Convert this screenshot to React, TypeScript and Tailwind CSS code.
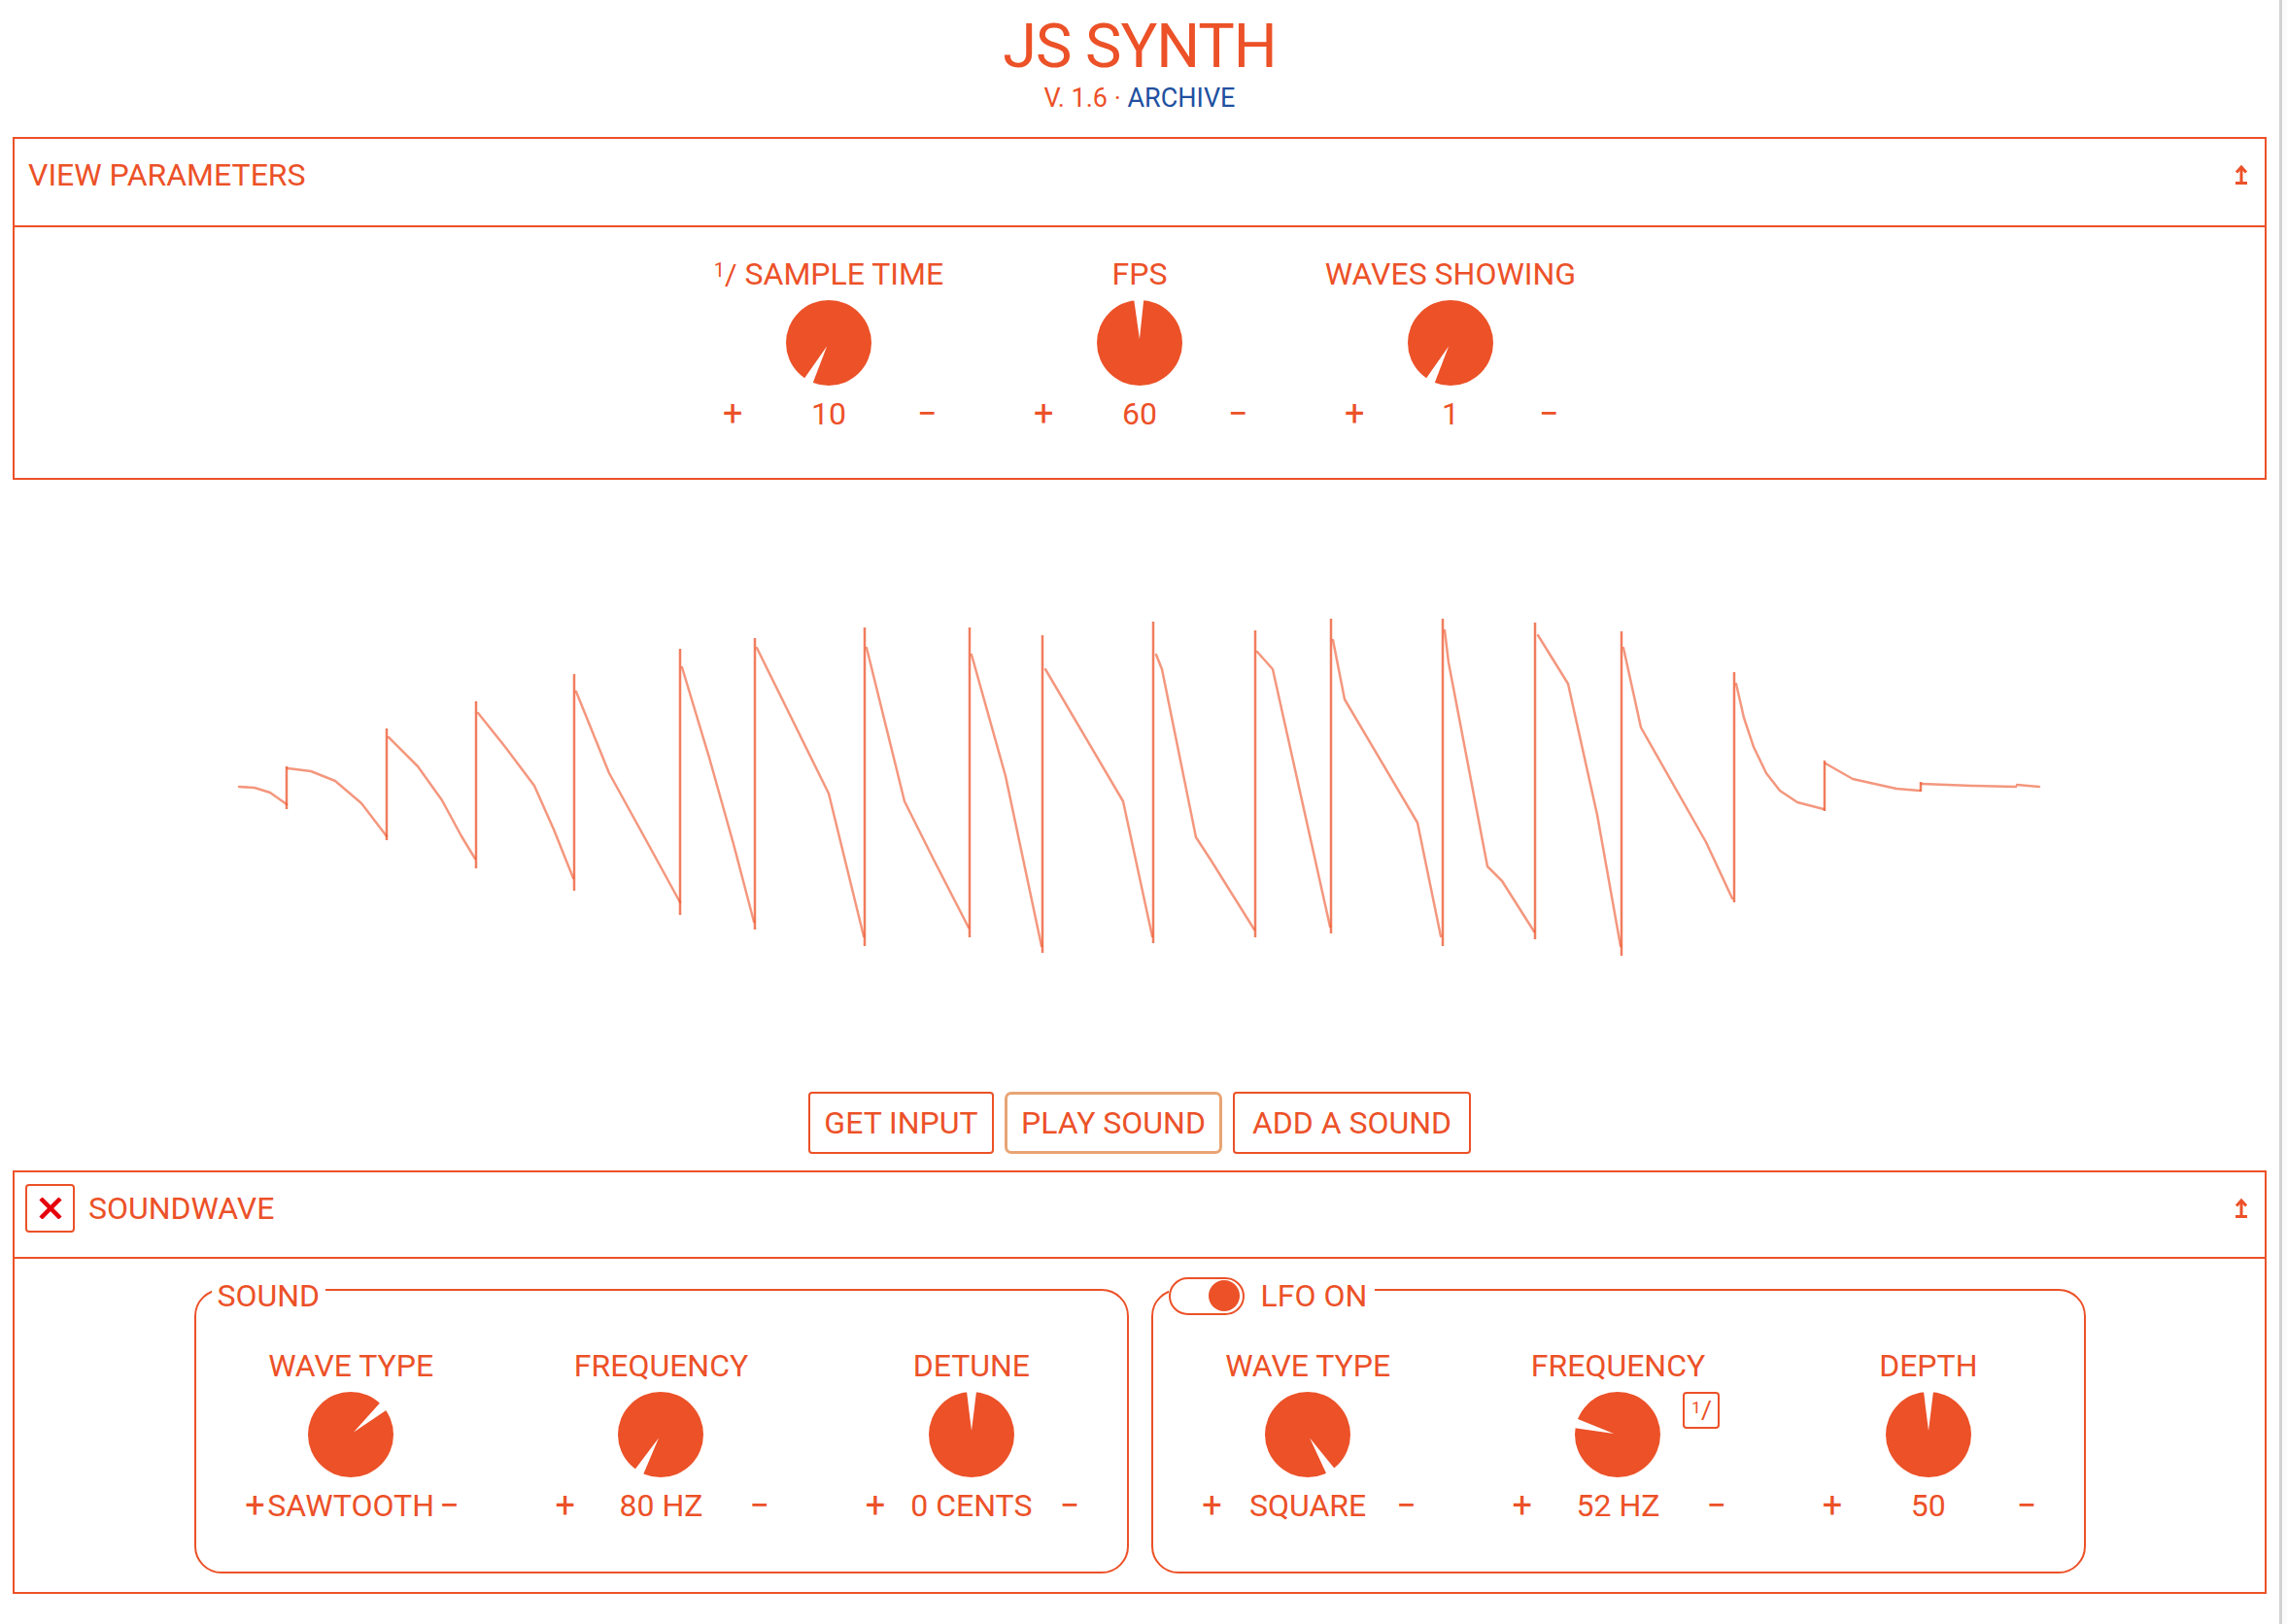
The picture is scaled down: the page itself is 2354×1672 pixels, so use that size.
import React from "react";

const ORANGE = "#EC5128";

type Pt = [number, number];

// waveform trace in page pixels: descending strokes, then the vertical jumps
const SEGMENTS: Pt[][] = [
  [[246, 811], [262, 812], [278, 817], [295, 829]],
  [[296, 792], [320, 795], [345, 805], [372, 828], [398, 862]],
  [[400, 760], [430, 790], [455, 825], [475, 862], [489, 885]],
  [[492, 735], [520, 770], [550, 810], [570, 855], [590, 905]],
  [[593, 713], [627, 797], [665, 866], [700, 930]],
  [[702, 688], [730, 781], [755, 870], [776, 950]],
  [[779, 668], [853, 818], [889, 965]],
  [[892, 668], [931, 826], [961, 886], [997, 956]],
  [[1000, 675], [1035, 800], [1072, 975]],
  [[1076, 690], [1156, 826], [1186, 965]],
  [[1190, 675], [1196, 690], [1231, 863], [1246, 886], [1291, 958]],
  [[1294, 672], [1310, 690], [1369, 955]],
  [[1372, 660], [1384, 721], [1459, 848], [1483, 965]],
  [[1487, 650], [1491, 683], [1531, 893], [1546, 908], [1579, 960]],
  [[1583, 655], [1614, 705], [1644, 840], [1668, 975]],
  [[1671, 668], [1689, 750], [1756, 868], [1783, 926]],
  [[1787, 705], [1795, 740], [1805, 770], [1818, 797], [1832, 815], [1850, 827], [1877, 834]],
  [[1879, 787], [1907, 803], [1952, 813], [1976, 815]],
  [[1978, 808], [2030, 810], [2075, 811]],
  [[2076, 809], [2099, 811]],
];

const JUMPS: [number, number, number][] = [
  [295, 834, 790],
  [398, 866, 751],
  [490, 895, 723],
  [591, 918, 695],
  [700, 943, 669],
  [777, 958, 658],
  [890, 975, 647],
  [998, 966, 647],
  [1073, 982, 655],
  [1187, 972, 641],
  [1292, 966, 650],
  [1370, 962, 638],
  [1485, 975, 638],
  [1580, 968, 642],
  [1669, 985, 651],
  [1785, 930, 693],
  [1878, 836, 784],
  [1977, 816, 806],
];

// "1/" mark used for reciprocal values
const OneOver = ({ className = "" }: { className?: string }) => (
  <span className={`inline-flex h-[0.75em] items-start leading-none ${className}`}>
    <span className="mt-[-0.04em] text-[0.62em] leading-none">1</span>
    <span className="mt-[-0.08em] text-[0.95em] leading-none">/</span>
  </span>
);

const Knob = ({ angle }: { angle: number }) => {
  const pt = (a: number, r: number) => {
    const rad = (a * Math.PI) / 180;
    return `${44 + r * Math.sin(rad)},${44 - r * Math.cos(rad)}`;
  };
  return (
    <svg width="88" height="88" viewBox="0 0 88 88" className="block">
      <circle cx="44" cy="44" r="44" fill={ORANGE} />
      <polygon points={`${pt(angle, 4)} ${pt(angle - 6.5, 50)} ${pt(angle + 6.5, 50)}`} fill="#fff" />
    </svg>
  );
};

const KnobControl = ({
  label,
  value,
  angle,
  badge,
  className = "w-[320px]",
}: {
  label: React.ReactNode;
  value: string;
  angle: number;
  badge?: boolean;
  className?: string;
}) => (
  <div className={`flex flex-col items-center ${className}`}>
    <div className="flex h-[40px] items-center whitespace-nowrap leading-[40px]">{label}</div>
    <div className="relative mt-[7px] h-[88px] w-[88px]">
      <Knob angle={angle} />
      {badge && (
        <div className="absolute left-[111px] top-0 flex h-[38px] w-[38px] items-center justify-center rounded-[4px] border-2 border-[#EC5128] text-[28px]">
          <OneOver />
        </div>
      )}
    </div>
    <div className="mt-[9px] flex h-[40px] items-center leading-[40px]">
      <span className="w-[18px] text-center text-[36px]">+</span>
      <span className="min-w-[182px] whitespace-nowrap text-center">{value}</span>
      <span className="w-[18px] text-center text-[36px]">−</span>
    </div>
  </div>
);

const UpBar = () => (
  <svg width="14" height="22" viewBox="0 0 14 22" fill="none" stroke={ORANGE} strokeWidth="3">
    <path d="M2 8.5 L7 3 L12 8.5" />
    <path d="M7 3 V19" />
    <path d="M1 19.5 H13" />
  </svg>
);

const App = () => {
  return (
    <div className="flex min-h-screen bg-white font-[Roboto,'Liberation_Sans',sans-serif] text-[32px] text-[#EC5128]">
      <div className="w-[2346px] shrink-0 pb-[32px]">
        {/* Title */}
        <header className="flex flex-col items-center pt-[16px]">
          <h1 className="text-[63px] leading-none tracking-[-1px]">JS SYNTH</h1>
          <p className="mt-[9px] text-[27px] leading-none">
            V. 1.6 · <span className="text-[#2150A0]">ARCHIVE</span>
          </p>
        </header>

        {/* View parameters */}
        <section className="mx-[13px] mt-[26px] border-2 border-[#EC5128]">
          <div className="flex items-start justify-between border-b-2 border-[#EC5128] pb-[27px] pl-[14px] pr-[17px] pt-[12px]">
            <div className="flex h-[50px] items-center">VIEW PARAMETERS</div>
            <div className="flex h-[50px] items-center">
              <UpBar />
            </div>
          </div>
          <div className="flex justify-center pb-[46px] pt-[28px]">
            <KnobControl
              label={
                <>
                  <OneOver className="mr-[8px]" />
                  SAMPLE TIME
                </>
              }
              value="10"
              angle={208}
            />
            <KnobControl label="FPS" value="60" angle={-1} />
            <KnobControl label="WAVES SHOWING" value="1" angle={208} />
          </div>
        </section>

        {/* Wave form */}
        <svg className="block h-[630px] w-[2346px]" viewBox="0 495 2346 630" fill="none">
          {SEGMENTS.map((seg, i) => (
            <polyline
              key={i}
              points={seg.map((p) => p.join(",")).join(" ")}
              stroke={ORANGE}
              strokeOpacity="0.6"
              strokeWidth="2.5"
              strokeLinejoin="round"
              strokeLinecap="round"
            />
          ))}
          {JUMPS.map(([x, lo, hi], i) => (
            <line key={i} x1={x} y1={lo} x2={x} y2={hi} stroke={ORANGE} strokeOpacity="0.75" strokeWidth="2.5" />
          ))}
        </svg>

        {/* Buttons */}
        <div className="flex h-[64px] justify-center gap-[11px]">
          <button className="h-[64px] w-[191px] rounded-[4px] border-2 border-[#EC5128] leading-none">GET INPUT</button>
          <button className="h-[64px] w-[224px] rounded-[7px] border-[3px] border-[#E9A474] leading-none">PLAY SOUND</button>
          <button className="h-[64px] w-[245px] rounded-[4px] border-2 border-[#EC5128] leading-none">ADD A SOUND</button>
        </div>

        {/* Soundwave */}
        <section className="mx-[13px] mt-[17px] border-2 border-[#EC5128]">
          <div className="flex items-start justify-between border-b-2 border-[#EC5128] pb-[25px] pl-[11px] pr-[17px] pt-[12px]">
            <div className="flex h-[50px] items-center">
              <button className="flex h-[50px] w-[51px] items-center justify-center rounded-[4px] border-2 border-[#EC5128]">
                <svg width="24" height="22" viewBox="0 0 24 22" stroke="#E5000B" strokeWidth="4.5">
                  <path d="M2 1 L22 21 M22 1 L2 21" />
                </svg>
              </button>
              <span className="ml-[14px]">SOUNDWAVE</span>
            </div>
            <div className="flex h-[50px] items-center">
              <UpBar />
            </div>
          </div>

          <div className="flex justify-center gap-[23px] pb-[19px] pt-[6px]">
            <fieldset className="w-[962px] rounded-[28px] border-2 border-[#EC5128] pb-[48px] pt-[32px]">
              <legend className="ml-[16px] px-[6px]">
                <div className="flex h-[52px] items-center pt-[12px] leading-[40px]">SOUND</div>
              </legend>
              <div className="grid grid-cols-3">
                <KnobControl label="WAVE TYPE" value="SAWTOOTH" angle={49} className="w-auto" />
                <KnobControl label="FREQUENCY" value="80 HZ" angle={210} className="w-auto" />
                <KnobControl label="DETUNE" value="0 CENTS" angle={0} className="w-auto" />
              </div>
            </fieldset>

            <fieldset className="w-[962px] rounded-[28px] border-2 border-[#EC5128] pb-[48px] pt-[32px]">
              <legend className="ml-[16px] pr-[8px]">
                <div className="flex h-[52px] items-center gap-[17px] pt-[12px] leading-[40px]">
                  <div className="flex h-[39px] w-[78px] items-center justify-end rounded-full border-2 border-[#EC5128] pr-[3px]">
                    <div className="h-[32px] w-[32px] rounded-full bg-[#EC5128]" />
                  </div>
                  <span>LFO ON</span>
                </div>
              </legend>
              <div className="grid grid-cols-3">
                <KnobControl label="WAVE TYPE" value="SQUARE" angle={148} className="w-auto" />
                <KnobControl label="FREQUENCY" value="52 HZ" angle={285} badge className="w-auto" />
                <KnobControl label="DEPTH" value="50" angle={0} className="w-auto" />
              </div>
            </fieldset>
          </div>
        </section>
      </div>
      <div className="flex-1 border-l-[3px] border-[#d2d2d2] bg-[#fbfbfb]" />
    </div>
  );
};

export default App;
